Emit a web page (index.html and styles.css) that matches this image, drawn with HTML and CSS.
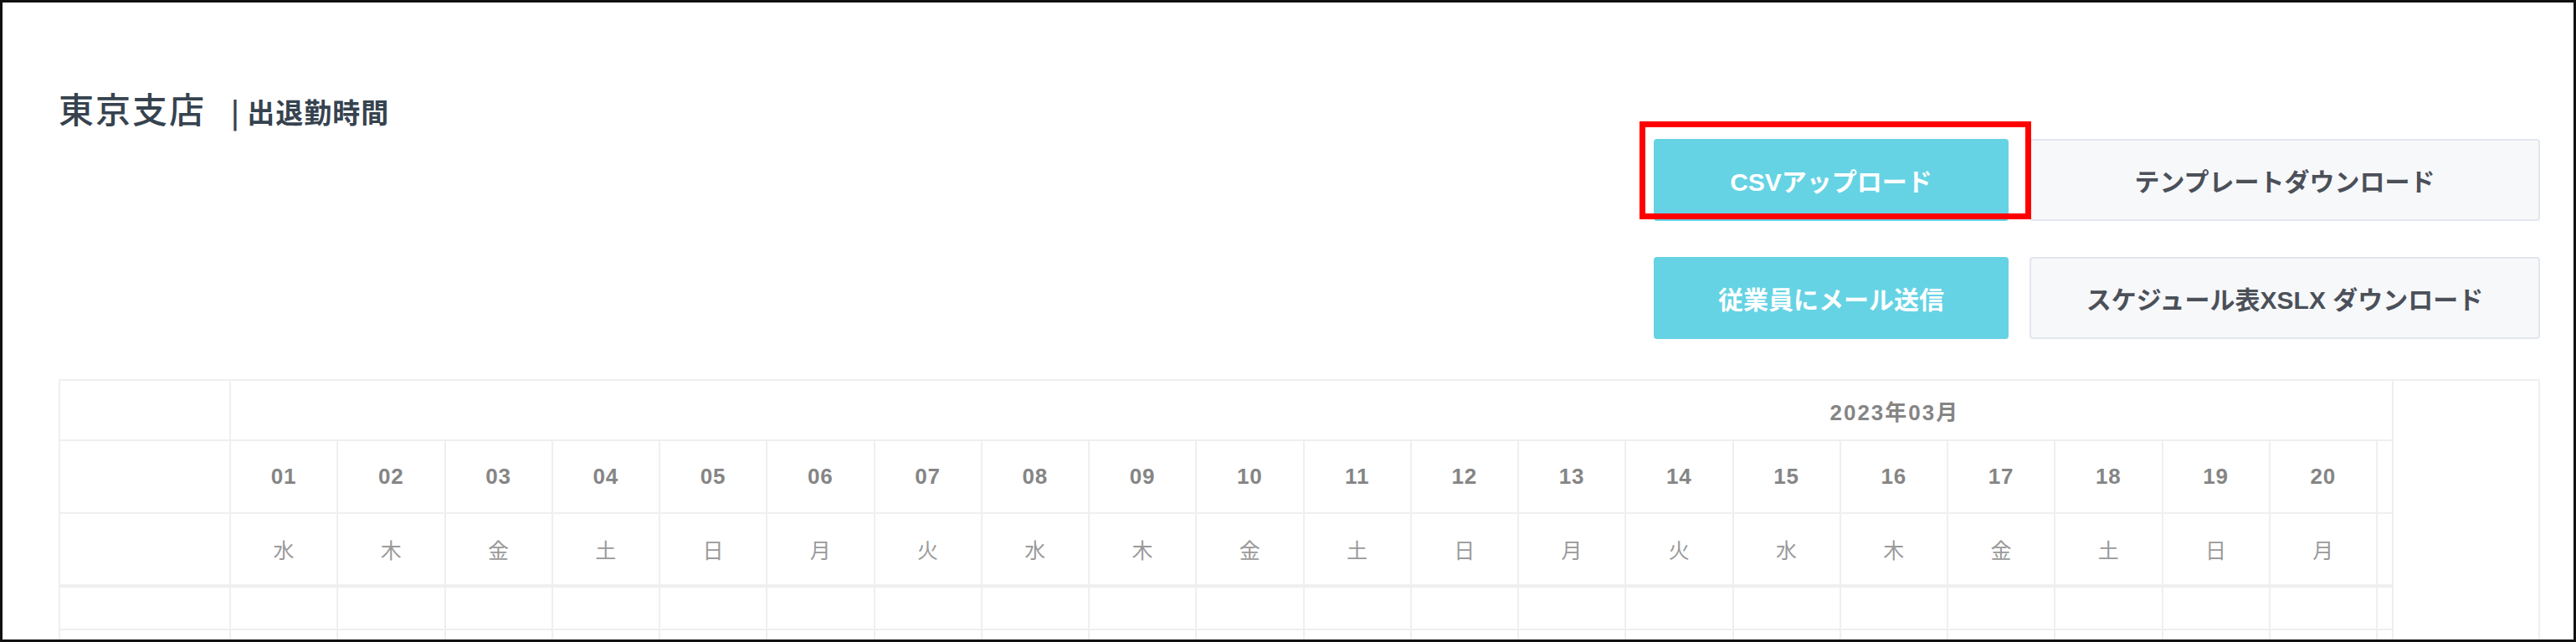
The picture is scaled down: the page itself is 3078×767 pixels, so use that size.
FILE: index.html
```html
<!DOCTYPE html>
<html lang="ja">

<head>
    <meta charset="UTF-8">
    <title>東京支店 – 出退勤時間</title>
    <link rel="stylesheet" href="styles.css">
</head>

<body>

    <div class="frame">
        <div class="page">

            <div class="head">
                <h1 class="title">東京支店<span class="sub">| 出退勤時間</span></h1>

                <div class="actions">
                    <button class="btn btn-primary">CSVアップロード</button>
                    <button class="btn btn-light">テンプレートダウンロード</button>
                    <button class="btn btn-primary">従業員にメール送信</button>
                    <button class="btn btn-light">スケジュール表XSLX ダウンロード</button>
                    <span class="highlight"></span>
                </div>
            </div>

            <div class="sheet">
                <div class="side">
                    <div class="cell row-month"></div>
                    <div class="cell row-date"></div>
                    <div class="cell row-week"></div>
                    <div class="cell row-body"></div>
                    <div class="cell row-body"></div>
                </div>

                <div class="scroll">
                    <div class="days" id="days">
                        <div class="month">2023年03月</div>
                    </div>
                </div>

                <div class="total"></div>
            </div>

        </div>
    </div>

    <script>
        // March 2023 starts on a Wednesday
        const week = ["日", "月", "火", "水", "木", "金", "土"];
        const days = document.getElementById("days");
        let dates = "", weekdays = "", body1 = "", body2 = "";

        for (let d = 1; d <= 31; d++) {
            const label = String(d).padStart(2, "0");
            dates += `<div class="day-cell date">${label}</div>`;
            weekdays += `<div class="day-cell wd">${week[(d + 2) % 7]}</div>`;
            body1 += `<div class="day-cell body"></div>`;
            body2 += `<div class="day-cell body"></div>`;
        }

        days.insertAdjacentHTML("beforeend", dates + weekdays + body1 + body2);
    </script>
</body>

</html>
```

FILE: styles.css
```css
html,
body {
    margin: 0;
    padding: 0;
    background: #fff;
}

body {
    font-family: 'Liberation Sans', 'Noto Sans CJK JP', sans-serif;
    color: #35424f;
}

.frame {
    width: 3078px;
    height: 767px;
    box-sizing: border-box;
    border: 3px solid #111;
    overflow: hidden;
}

.page {
    padding: 0 40px 0 67px;
}

/* header */

.head {
    display: flex;
    justify-content: space-between;
    align-items: flex-start;
}

.title {
    margin: 98px 0 0;
    font-family: 'Noto Sans CJK JP', sans-serif;
    font-size: 42px;
    font-weight: 500;
    line-height: 56px;
    letter-spacing: 2px;
    color: #36434f;
}

.title .sub {
    margin-left: 30px;
    font-size: 33px;
    font-weight: 700;
    letter-spacing: 1px;
}

.actions {
    position: relative;
    margin-top: 163px;
    display: grid;
    grid-template-columns: 424px 610px;
    grid-auto-rows: 98px;
    column-gap: 25px;
    row-gap: 43px;
}

.btn {
    font-family: 'Liberation Sans', 'Noto Sans CJK JP', sans-serif;
    font-size: 30px;
    font-weight: 700;
    border-radius: 4px;
    cursor: pointer;
    padding: 0;
}

.btn-primary {
    background: #65d3e4;
    border: 2px solid #65d3e4;
    color: #fff;
}

.btn-light {
    background: #f7f8fa;
    border: 2px solid #e3e6ee;
    color: #4b5059;
}

.highlight {
    position: absolute;
    left: -17px;
    top: -21px;
    width: 468px;
    height: 117px;
    box-sizing: border-box;
    border: 7px solid #ff0000;
    pointer-events: none;
}

/* sheet */

.sheet {
    margin-top: 48px;
    display: flex;
    border-top: 2px solid #efefef;
    border-left: 2px solid #efefef;
    border-right: 2px solid #efefef;
    height: 400px;
}

.side {
    width: 204px;
    flex: none;
}

.cell {
    box-sizing: border-box;
    border-right: 2px solid #efefef;
    border-bottom: 2px solid #efefef;
}

.row-month {
    height: 72px;
}

.row-date {
    height: 87px;
}

.row-week {
    height: 88px;
    border-bottom-width: 4px;
}

.row-body {
    height: 51px;
}

.scroll {
    flex: 1;
    overflow: hidden;
}

.days {
    display: grid;
    grid-template-columns: repeat(31, 128.25px);
    grid-template-rows: 72px 87px 88px 51px 51px;
    width: max-content;
}

.month {
    grid-column: 1 / -1;
    box-sizing: border-box;
    border-bottom: 2px solid #efefef;
    display: flex;
    align-items: center;
    justify-content: center;
    font-size: 26px;
    font-weight: 700;
    letter-spacing: 2px;
    color: #858585;
}

.day-cell {
    box-sizing: border-box;
    border-right: 2px solid #efefef;
    border-bottom: 2px solid #efefef;
    display: flex;
    align-items: center;
    justify-content: center;
}

.date {
    font-size: 26px;
    font-weight: 700;
    letter-spacing: 1px;
    color: #858585;
}

.wd {
    border-bottom-width: 4px;
    font-family: 'Noto Sans CJK JP', sans-serif;
    font-size: 25px;
    color: #9a9a9a;
}

.total {
    width: 173px;
    flex: none;
    border-left: 2px solid #efefef;
}
```
